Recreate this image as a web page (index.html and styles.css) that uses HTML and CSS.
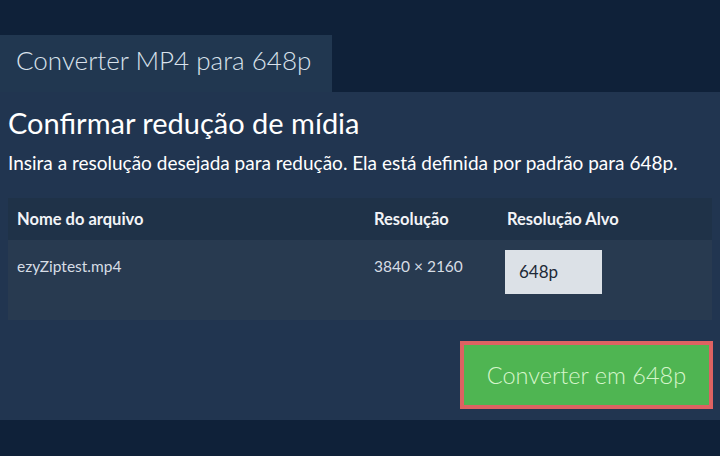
FILE: index.html
```html
<!DOCTYPE html>
<html lang="pt">
<head>
<meta charset="utf-8">
<link rel="stylesheet" href="styles.css">
</head>
<body>
<div class="page">
  <div class="tabs">
    <div class="tab">Converter MP4 para 648p</div>
  </div>
  <div class="panel">
    <h1 class="title">Confirmar redução de mídia</h1>
    <p class="desc">Insira a resolução desejada para redução. Ela está definida por padrão para 648p.</p>
    <div class="table">
      <div class="row head">
        <div class="c1">Nome do arquivo</div>
        <div class="c2">Resolução</div>
        <div class="c3">Resolução Alvo</div>
      </div>
      <div class="row body">
        <div class="c1">ezyZiptest.mp4</div>
        <div class="c2">3840 × 2160</div>
        <div class="c3"><div class="input">648p</div></div>
      </div>
    </div>
    <div class="actions">
      <button class="btn">Converter em 648p</button>
    </div>
  </div>
</div>
</body>
</html>
```

FILE: styles.css
```css
html, body {
  margin: 0;
  padding: 0;
  background: #0f2139;
}
.page {
  width: 720px;
  height: 456px;
  background: #0f2139;
  font-family: Lato, "Open Sans", sans-serif;
  color: #ffffff;
  overflow: hidden;
}
.tabs {
  padding-top: 35px;
  display: flex;
}
.tab {
  width: 332px;
  height: 57px;
  box-sizing: border-box;
  background: #213750;
  color: #d9e2ec;
  font-size: 26px;
  font-weight: 300;
  padding: 9px 0 0 16px;
}
.panel {
  background: #213550;
  height: 328px;
  padding: 0 8px;
  box-sizing: border-box;
}
.title {
  margin: 0;
  padding-top: 14px;
  font-size: 29px;
  font-weight: 400;
  line-height: 34px;
  color: #ffffff;
}
.desc {
  margin: 0;
  padding-top: 11px;
  font-size: 19px;
  line-height: 24px;
  color: #ffffff;
}
.table {
  margin-top: 23px;
}
.row {
  display: flex;
}
.row.head {
  height: 42px;
  background: #1f3248;
  align-items: center;
  font-weight: 700;
  font-size: 16.5px;
  color: #f2f4f7;
}
.row.body {
  height: 80px;
  background: #283a50;
  align-items: flex-start;
  font-size: 15.5px;
  color: #d7dde5;
}
.c1 {
  width: 357px;
  padding-left: 9px;
}
.c2 {
  width: 133px;
}
.c3 {
  flex: 1;
}
.row.body .c1, .row.body .c2 {
  padding-top: 17px;
}
.row.body .c3 {
  padding-top: 10px;
}
.input {
  width: 97px;
  height: 44px;
  box-sizing: border-box;
  background: #dce1e7;
  color: #1e2a38;
  font-size: 17px;
  line-height: 44px;
  padding-left: 14px;
  margin-left: -2px;
}
.actions {
  display: flex;
  justify-content: flex-end;
  padding-top: 21px;
}
.btn {
  width: 253px;
  height: 68px;
  box-sizing: border-box;
  border: 4px solid #dd6262;
  background: #4fb552;
  color: #d6f5cc;
  font-family: Lato, "Open Sans", sans-serif;
  font-size: 23.5px;
  font-weight: 300;
  margin-right: -1px;
  padding: 0;
}
```
